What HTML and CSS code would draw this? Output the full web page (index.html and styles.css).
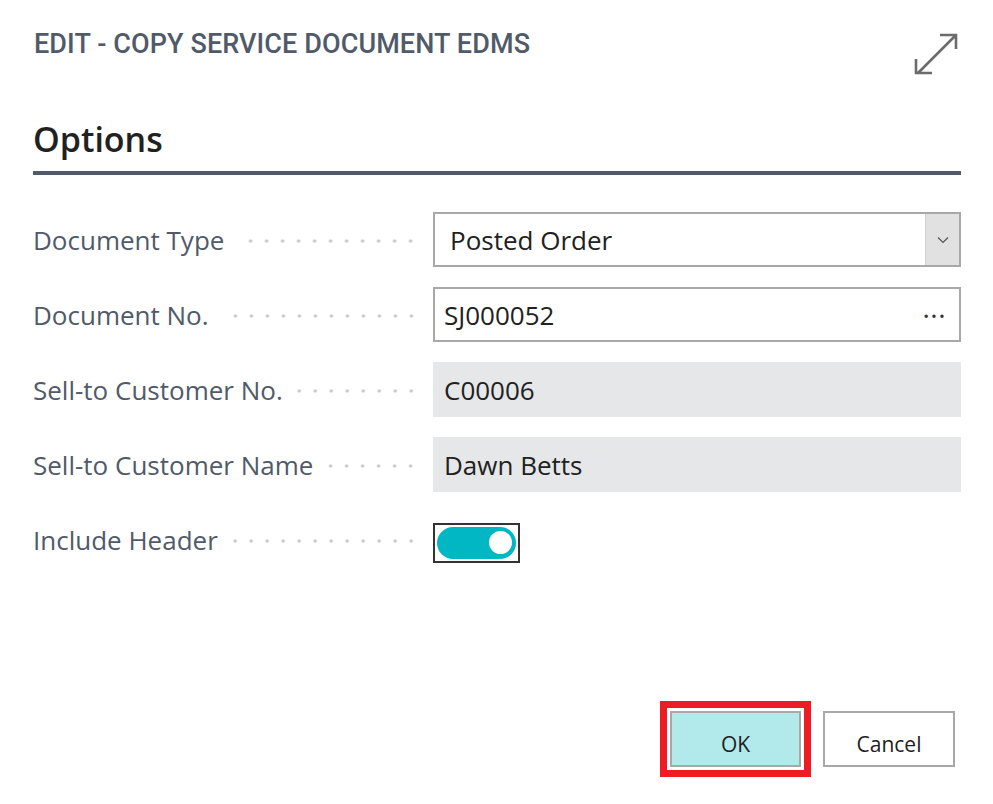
FILE: index.html
```html
<!DOCTYPE html>
<html lang="en">
<head>
<meta charset="utf-8">
<title>Edit - Copy Service Document EDMS</title>
<link rel="stylesheet" href="styles.css">
</head>
<body>
<div class="dialog">
  <header class="header">
    <h1 class="title">EDIT - COPY SERVICE DOCUMENT EDMS</h1>
    <svg class="expand" width="44" height="44" viewBox="0 0 44 44" aria-hidden="true">
      <path d="M26 2H42V16M2 26V40H18M3.5 40.5L41 3" fill="none" stroke="#6b6b6b" stroke-width="2.6"/>
    </svg>
  </header>
  <h2 class="section">Options</h2>
  <div class="rule"></div>
  <div class="form">
    <div class="row">
      <div class="label"><span>Document Type</span><i class="dots"></i></div>
      <div class="field select"><span class="val">Posted Order</span><span class="drop"><svg width="12" height="8" viewBox="0 0 12 8"><path d="M1 1.5L6 6.5L11 1.5" fill="none" stroke="#555" stroke-width="1.2"/></svg></span></div>
    </div>
    <div class="row">
      <div class="label"><span>Document No.</span><i class="dots"></i></div>
      <div class="field lookup"><span class="val">SJ000052</span><span class="more">&middot;&middot;&middot;</span></div>
    </div>
    <div class="row">
      <div class="label"><span>Sell-to Customer No.</span><i class="dots"></i></div>
      <div class="field readonly"><span class="val">C00006</span></div>
    </div>
    <div class="row">
      <div class="label"><span>Sell-to Customer Name</span><i class="dots"></i></div>
      <div class="field readonly"><span class="val">Dawn Betts</span></div>
    </div>
    <div class="row row-toggle">
      <div class="label"><span>Include Header</span><i class="dots"></i></div>
      <div class="toggle-wrap"><div class="toggle"><div class="knob"></div></div></div>
    </div>
  </div>
  <footer class="footer">
    <div class="focus-ring"><button class="btn btn-ok">OK</button></div>
    <button class="btn btn-cancel">Cancel</button>
  </footer>
</div>
</body>
</html>
```
FILE: styles.css
```css
html, body {
  margin: 0;
  padding: 0;
  background: #ffffff;
}
.dialog {
  width: 993px;
  height: 804px;
  box-sizing: border-box;
  padding: 0 32px 0 33px;
  display: flex;
  flex-direction: column;
  font-family: "Open Sans", "Noto Sans", sans-serif;
}
.header {
  display: flex;
  justify-content: space-between;
  align-items: flex-start;
  height: 100px;
}
.title {
  margin: 28px 0 0 1px;
  font-family: Roboto, "Liberation Sans", sans-serif;
  font-weight: 500;
  font-size: 27px;
  line-height: 32px;
  color: #505a6a;
  letter-spacing: 0.1px;
}
.expand {
  margin: 33px 3px 0 0;
}
.section {
  margin: 16px 0 0 0;
  font-size: 34px;
  line-height: 46px;
  font-weight: 600;
  color: #212121;
}
.rule {
  margin-top: 9px;
  height: 4px;
  background: #505a6a;
}
.form {
  margin-top: 37px;
  display: flex;
  flex-direction: column;
  gap: 20px;
}
.row {
  display: grid;
  grid-template-columns: 400px 1fr;
  height: 55px;
  align-items: center;
}
.label {
  display: flex;
  align-items: center;
  padding-right: 14px;
  font-size: 26px;
  color: #505a6a;
  white-space: nowrap;
}
.dots {
  flex: 1;
  height: 4px;
  margin-left: 14px;
  margin-top: 2px;
  background-image: radial-gradient(circle, #c6c6c6 1.4px, transparent 1.8px);
  background-size: 16px 4px;
  background-position: right center;
  background-repeat: repeat-x;
}
.field {
  height: 55px;
  box-sizing: border-box;
  display: flex;
  align-items: center;
  font-size: 26px;
  color: #212121;
}
.select, .lookup {
  border: 2px solid #a8a8a8;
  background: #fff;
}
.select .val {
  padding-left: 15px;
  flex: 1;
}
.drop {
  width: 33px;
  align-self: stretch;
  background: #e1e1e1;
  border-left: 1px solid #cfcfcf;
  display: flex;
  align-items: center;
  justify-content: center;
}
.lookup .val {
  padding-left: 9px;
  flex: 1;
}
.more {
  padding-right: 13px;
  font-size: 28px;
  letter-spacing: 0.5px;
  color: #333;
}
.readonly {
  background: #e6e7e9;
}
.readonly .val {
  padding-left: 11px;
}
.toggle-wrap {
  width: 87px;
  height: 40px;
  box-sizing: border-box;
  border: 2px solid #333;
  padding: 2px;
  margin-top: 6px;
}
.toggle {
  height: 32px;
  border-radius: 16px;
  background: #00b7c3;
  display: flex;
  align-items: center;
  justify-content: flex-end;
  padding-right: 4px;
}
.knob {
  width: 23px;
  height: 23px;
  border-radius: 50%;
  background: #fff;
}
.footer {
  margin-top: auto;
  margin-bottom: 27px;
  display: flex;
  justify-content: flex-end;
  align-items: center;
  gap: 12px;
  padding-right: 6px;
}
.focus-ring {
  border: 7px solid #ed1c24;
  padding: 3px;
}
.btn {
  font-family: "Open Sans", "Noto Sans", sans-serif;
  font-size: 21px;
  color: #212121;
  height: 56px;
  box-sizing: border-box;
  border: 2px solid #a8a8a8;
  padding: 9px 0 0 0;
  display: block;
}
.btn-ok {
  width: 131px;
  background: #b2eaec;
}
.btn-cancel {
  width: 132px;
  background: #fff;
}
```
